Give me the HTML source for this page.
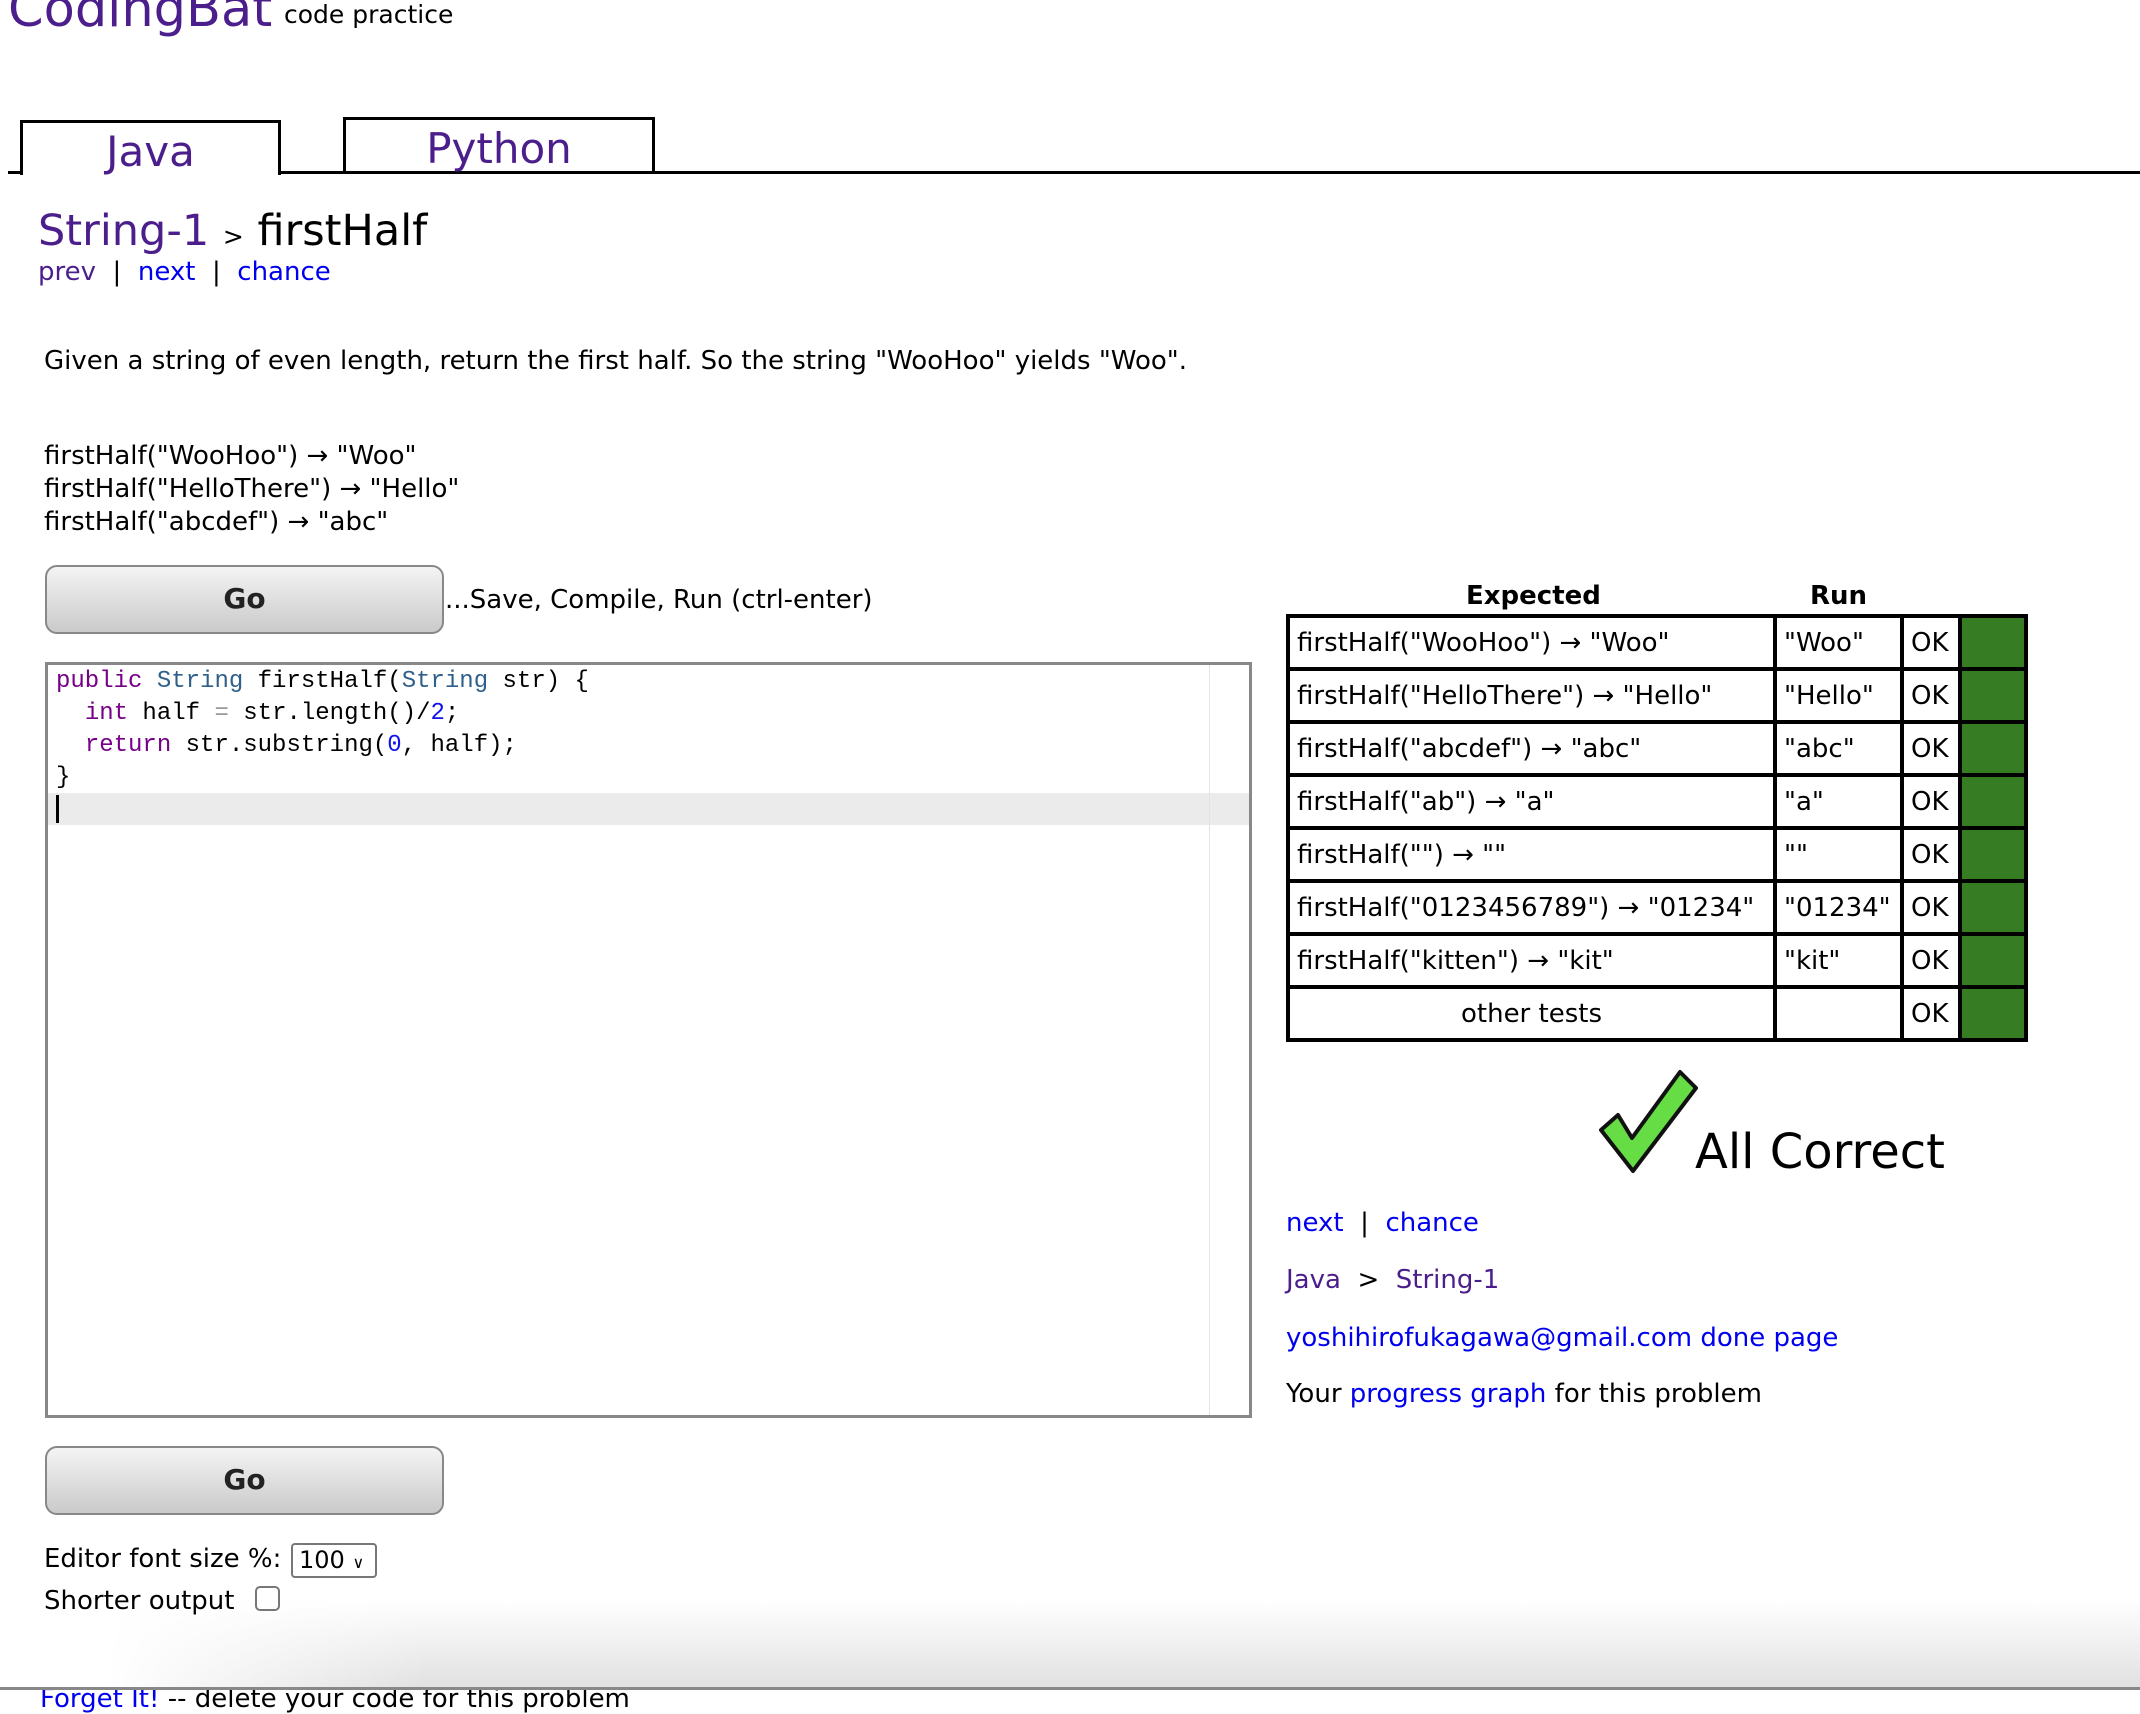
<!DOCTYPE html>
<html><head><meta charset="utf-8"><style>
*{margin:0;padding:0;box-sizing:border-box}
body{width:2140px;height:1690px;position:relative;overflow:hidden;background:#fff;font-family:"DejaVu Sans","Liberation Sans",sans-serif;color:#000}
.a{position:absolute;white-space:nowrap}
.p{color:#4b1e8c}.b{color:#0000ee}
.t{font-size:26px}
.tab{position:absolute;border:3px solid #000;background:#fff;text-align:center;font-size:42px;color:#4b1e8c}
.go{position:absolute;left:45px;width:399px;height:69px;border:2px solid #888;border-radius:12px;background:linear-gradient(#f4f4f4,#cacaca);font-weight:bold;font-size:28px;color:#222;text-align:center;line-height:64px}
table{position:absolute;left:1286px;top:614px;border-collapse:collapse;border:4px solid #000}
td{border:4px solid #000;height:53px;font-size:26px;padding:0 7px;white-space:nowrap}
td.g{background:#367c23;width:66px;padding:0}
.code{position:absolute;left:56px;font-family:"Liberation Mono",monospace;font-size:24px;white-space:pre}
.k{color:#770088}.ty{color:#2f5f8a}.n{color:#1111ee}
</style></head><body>
<div style="position:absolute;left:0;top:1600px;width:2140px;height:90px;background:linear-gradient(to right,rgba(255,255,255,1) 5%,rgba(255,255,255,0) 20%),linear-gradient(to bottom,rgba(228,228,228,0),rgba(224,224,224,1))"></div>
<div class="a p" style="left:8px;top:-20px;font-size:51px">CodingBat</div>
<div class="a" style="left:284px;top:0px;font-size:25px">code practice</div>

<div style="position:absolute;left:8px;top:171px;width:2140px;height:3px;background:#000"></div>
<div class="tab" style="left:20px;top:120px;width:261px;height:55px;border-bottom:none;line-height:58px">Java</div>
<div class="tab" style="left:343px;top:117px;width:312px;height:57px;line-height:58px">Python</div>

<div class="a" style="left:38px;top:206px;font-size:43px"><span class="p">String-1</span> <span style="font-size:25px">&gt;</span> firstHalf</div>
<div class="a t" style="left:38px;top:257px"><span class="p">prev</span> &nbsp;| &nbsp;<span class="b">next</span> &nbsp;| &nbsp;<span class="b">chance</span></div>

<div class="a t" style="left:44px;top:346px">Given a string of even length, return the first half. So the string "WooHoo" yields "Woo".</div>
<div class="a t" style="left:44px;top:440px;line-height:33px">firstHalf("WooHoo") → "Woo"<br>firstHalf("HelloThere") → "Hello"<br>firstHalf("abcdef") → "abc"</div>

<div class="go" style="top:565px">Go</div>
<div class="a t" style="left:445px;top:585px">...Save, Compile, Run (ctrl-enter)</div>

<div style="position:absolute;left:45px;top:662px;width:1207px;height:756px;border:3px solid #888;background:#fff"></div>
<div style="position:absolute;left:48px;top:793px;width:1201px;height:32px;background:#ebebeb"></div>
<div style="position:absolute;left:1209px;top:665px;width:1px;height:750px;background:#e4e4e4"></div>
<div class="code" style="top:666px;line-height:32px"><span class="k">public</span> <span class="ty">String</span> firstHalf(<span class="ty">String</span> str) {
  <span class="k">int</span> half <span style="color:#999">=</span> str.length()/<span class="n">2</span>;
  <span class="k">return</span> str.substring(<span class="n">0</span>, half);
}</div>
<div style="position:absolute;left:56px;top:795px;width:3px;height:28px;background:#000"></div>

<div class="go" style="top:1446px">Go</div>
<div class="a t" style="left:44px;top:1544px">Editor font size %:</div>
<div style="position:absolute;left:291px;top:1543px;width:86px;height:35px;border:2px solid #777;border-radius:4px;font-size:24px;padding-left:6px;line-height:31px">100 <span style="font-size:16px">∨</span></div>
<div class="a t" style="left:44px;top:1586px">Shorter output</div>
<div style="position:absolute;left:255px;top:1586px;width:25px;height:25px;border:2px solid #777;border-radius:5px"></div>

<div class="a b" style="left:40px;top:1684px;font-size:26px">Forget It! <span style="color:#000">-- delete your code for this problem</span></div>
<div style="position:absolute;left:0;top:1687px;width:2140px;height:3px;background:#888"></div>

<div class="a" style="left:1466px;top:581px;font-size:26px;font-weight:bold">Expected</div>
<div class="a" style="left:1810px;top:581px;font-size:26px;font-weight:bold">Run</div>
<table>
<tr><td style="width:487px">firstHalf("WooHoo") → "Woo"</td><td style="width:127px">"Woo"</td><td style="width:58px">OK</td><td class="g"></td></tr>
<tr><td>firstHalf("HelloThere") → "Hello"</td><td>"Hello"</td><td>OK</td><td class="g"></td></tr>
<tr><td>firstHalf("abcdef") → "abc"</td><td>"abc"</td><td>OK</td><td class="g"></td></tr>
<tr><td>firstHalf("ab") → "a"</td><td>"a"</td><td>OK</td><td class="g"></td></tr>
<tr><td>firstHalf("") → ""</td><td>""</td><td>OK</td><td class="g"></td></tr>
<tr><td>firstHalf("0123456789") → "01234"</td><td>"01234"</td><td>OK</td><td class="g"></td></tr>
<tr><td>firstHalf("kitten") → "kit"</td><td>"kit"</td><td>OK</td><td class="g"></td></tr>
<tr><td style="text-align:center">other tests</td><td></td><td>OK</td><td class="g"></td></tr>
</table>

<svg style="position:absolute;left:1598px;top:1068px" width="100" height="106" viewBox="0 0 100 106">
<path d="M3,62 L20,47 L34,70 L82,4 L98,20 L35,103 Z" fill="#66dd44" stroke="#111" stroke-width="4" stroke-linejoin="round"/>
</svg>
<div class="a" style="left:1695px;top:1124px;font-size:48px">All Correct</div>

<div class="a t" style="left:1286px;top:1208px"><span class="b">next</span> &nbsp;| &nbsp;<span class="b">chance</span></div>
<div class="a t" style="left:1286px;top:1265px"><span class="p">Java</span> &nbsp;&gt; &nbsp;<span class="p">String-1</span></div>
<div class="a t b" style="left:1286px;top:1323px">yoshihirofukagawa@gmail.com done page</div>
<div class="a t" style="left:1286px;top:1379px">Your <span class="b">progress graph</span> for this problem</div>
</body></html>
